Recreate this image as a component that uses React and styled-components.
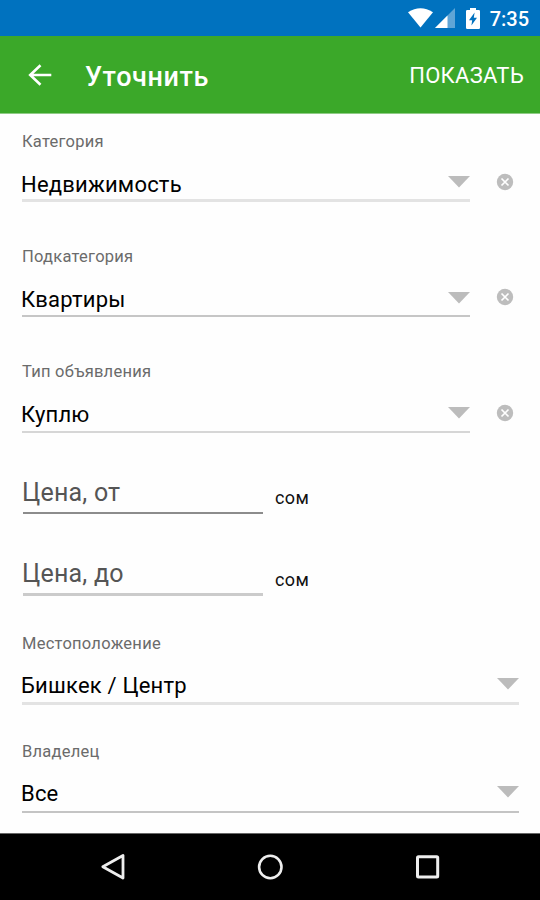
import React from 'react'
import styled, { createGlobalStyle } from 'styled-components';

const selects = [
    { label: 'Категория', value: 'Недвижимость', top: 18, gap: 19, height: 28, caret: 5, line: 3, color: '#e3e3e3', clearable: true },
    { label: 'Подкатегория', value: 'Квартиры', top: 45, gap: 19, height: 29, caret: 6, line: 2, color: '#c6c6c6', clearable: true },
    { label: 'Тип объявления', value: 'Куплю', top: 45, gap: 19, height: 30, caret: 6, line: 2, color: '#d6d6d6', clearable: true },
];

const prices = [
    { label: 'Цена, от', top: 45, line: 2, color: '#8c8c8c' },
    { label: 'Цена, до', top: 45, line: 3, color: '#cbcbcb' },
];

const places = [
    { label: 'Местоположение', value: 'Бишкек / Центр', top: 38, gap: 18, height: 30, caret: 6, line: 3, color: '#e3e3e3' },
    { label: 'Владелец', value: 'Все', top: 37, gap: 18, height: 31, caret: 6, line: 2, color: '#c4c4c4' },
];

function SelectField({ field }) {
    return (
        <FieldRow $top={field.top}>
            <Select>
                <Label>{field.label}</Label>
                <ValueRow $gap={field.gap} $height={field.height} $line={field.line} $color={field.color}>
                    <Value>{field.value}</Value>
                    <Caret viewBox="0 0 22 12" $top={field.caret}>
                        <path d="M0 0H22L11 11.5Z" fill="#bcbcbc" />
                    </Caret>
                </ValueRow>
            </Select>
            {field.clearable && (
                <ClearButton aria-label="Очистить">
                    <svg width="18" height="18" viewBox="0 0 18 18">
                        <circle cx="9" cy="9" r="8.2" fill="#bdbdbd" />
                        <path d="M5.5 5.5L12.5 12.5M12.5 5.5L5.5 12.5" stroke="#fff" strokeWidth="1.7" />
                    </svg>
                </ClearButton>
            )}
        </FieldRow>
    )
}

function PriceField({ field }) {
    return (
        <PriceRow $top={field.top}>
            <PriceInput $line={field.line} $color={field.color}>{field.label}</PriceInput>
            <Currency>сом</Currency>
        </PriceRow>
    )
}

export default function App() {
    return (
        <Screen>
            <GlobalStyle />
            <StatusBar>
                <svg width="25" height="20" viewBox="0 0 25 20">
                    <path d="M0 4.2Q12.5 -3.8 25 4.2L12.5 19.5Z" fill="#fff" />
                </svg>
                <svg width="20" height="20" viewBox="0 0 20 20">
                    <path d="M20 0V20H0Z" fill="#5fa5d6" />
                    <path d="M12.5 7.5V20H0Z" fill="#fff" />
                </svg>
                <Battery width="14" height="21" viewBox="0 0 14 21">
                    <path d="M4 0H10V2H12.8Q14 2 14 3.2V19.8Q14 21 12.8 21H1.2Q0 21 0 19.8V3.2Q0 2 1.2 2H4Z" fill="#fff" />
                    <path d="M8.6 4.5L3 12.3H6.2L5.4 17.5L11 9.8H7.8Z" fill="#0072bf" />
                </Battery>
                <Time>7:35</Time>
            </StatusBar>
            <AppBar>
                <BackButton aria-label="Назад">
                    <svg width="24" height="22" viewBox="0 0 24 22">
                        <path d="M12.5 1.2L2.2 11L12.5 20.8M2.2 11H23.3" fill="none" stroke="#fff" strokeWidth="2.6" />
                    </svg>
                </BackButton>
                <Title>Уточнить</Title>
                <ShowButton>Показать</ShowButton>
            </AppBar>
            <Form>
                {selects.map((field) => <SelectField key={field.label} field={field} />)}
                {prices.map((field) => <PriceField key={field.label} field={field} />)}
                {places.map((field) => <SelectField key={field.label} field={field} />)}
            </Form>
            <NavBar>
                <svg width="26" height="28" viewBox="0 0 26 28">
                    <path d="M23 2.5V25L2.8 13.8Z" fill="none" stroke="#eee" strokeWidth="2.8" strokeLinejoin="round" />
                </svg>
                <svg width="26" height="28" viewBox="0 0 26 28">
                    <circle cx="13.3" cy="14" r="11.2" fill="none" stroke="#eee" strokeWidth="2.6" />
                </svg>
                <svg width="26" height="28" viewBox="0 0 26 28">
                    <rect x="3.5" y="3.7" width="20.2" height="20.2" rx="1" fill="none" stroke="#eee" strokeWidth="3" />
                </svg>
            </NavBar>
        </Screen>
    )
}

const GlobalStyle = createGlobalStyle`
  * {
    box-sizing: border-box;
  }

  body {
    margin: 0;
    background: #fefefe;
    font-family: Roboto, "Noto Sans", sans-serif;
  }

  button {
    padding: 0;
    border: 0;
    background: none;
    font-family: inherit;
    color: inherit;
  }

  svg {
    display: block;
    flex: none;
  }
`;

const Screen = styled.div`
  display: flex;
  flex-direction: column;
  width: 540px;
  height: 900px;
  overflow: hidden;
  background: #fefefe;
`;

const StatusBar = styled.div`
  display: flex;
  align-items: center;
  justify-content: flex-end;
  height: 36px;
  padding-right: 11px;
  background: #0072bf;
  color: #fff;

  svg + svg {
    margin-left: 2px;
  }
`;

const Battery = styled.svg`
  && {
    margin-left: 11px;
  }
`;

const Time = styled.span`
  margin: 2px 0 0 10px;
  font-size: 20px;
  font-weight: 500;
  line-height: 24px;
`;

const AppBar = styled.header`
  display: flex;
  align-items: center;
  height: 78px;
  padding: 0 16px 0 28px;
  border-bottom: 1px solid #8fcb85;
  background: #3ba829;
  color: #fff;
`;

const BackButton = styled.button`
  margin-top: 1px;
`;

const Title = styled.h1`
  flex: 1;
  margin: 4px 0 0 33px;
  font-size: 27px;
  font-weight: 500;
  line-height: 32px;
  letter-spacing: 0.6px;
`;

const ShowButton = styled.button`
  margin-top: 3px;
  font-size: 22px;
  line-height: 28px;
  letter-spacing: 0.3px;
  text-transform: uppercase;
`;

const Form = styled.main`
  height: 719px;
  padding: 0 21px 0 22px;
`;

const FieldRow = styled.div`
  display: flex;
  align-items: flex-end;
  padding-top: ${({ $top }) => $top}px;
`;

const Select = styled.div`
  flex: 1;
`;

const Label = styled.div`
  font-size: 16.5px;
  line-height: 20px;
  letter-spacing: 0.25px;
  color: #6b6b6b;
`;

const ValueRow = styled.div`
  display: flex;
  align-items: flex-start;
  justify-content: space-between;
  height: ${({ $line, $height }) => $height + $line}px;
  margin-top: ${({ $gap }) => $gap}px;
  border-bottom: ${({ $line, $color }) => `${$line}px solid ${$color}`};
`;

const Value = styled.span`
  margin-left: -1px;
  font-size: 22px;
  line-height: 28px;
  letter-spacing: 0.2px;
  color: #000;
`;

const Caret = styled.svg`
  width: 22px;
  height: 12px;
  margin-top: ${({ $top }) => $top}px;
`;

const ClearButton = styled.button`
  margin: 0 5px 11px 26px;
`;

const PriceRow = styled.div`
  display: flex;
  align-items: flex-end;
  padding-top: ${({ $top }) => $top}px;
`;

const PriceInput = styled.div`
  width: 240px;
  height: ${({ $line }) => 34 + $line}px;
  margin-left: 1px;
  border-bottom: ${({ $line, $color }) => `${$line}px solid ${$color}`};
  font-size: 25px;
  line-height: 30px;
  letter-spacing: 0.2px;
  text-indent: -1px;
  color: #555;
`;

const Currency = styled.span`
  margin: 0 0 4px 12px;
  font-size: 18px;
  line-height: 24px;
  letter-spacing: 0.4px;
  color: #111;
`;

const NavBar = styled.nav`
  display: flex;
  justify-content: space-between;
  height: 67px;
  padding: 19px 100px 0;
  border-top: 1px solid #666;
  background: #000;
`;
